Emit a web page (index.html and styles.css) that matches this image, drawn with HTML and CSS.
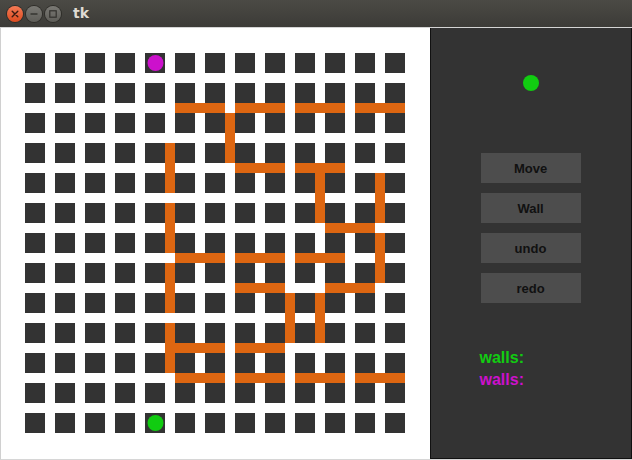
FILE: index.html
```html
<!DOCTYPE html>
<html>
<head>
<meta charset="utf-8">
<title>tk</title>
<link rel="stylesheet" href="styles.css">
</head>
<body>
<div class="window">
  <div class="titlebar">
    <div class="wbtn close"><svg width="16" height="16" viewBox="0 0 16 16"><path d="M5.2 5.2 L10.8 10.8 M10.8 5.2 L5.2 10.8" stroke="#3a1a10" stroke-width="1.4" stroke-linecap="round"/></svg></div>
    <div class="wbtn"><svg width="16" height="16" viewBox="0 0 16 16"><path d="M4.5 8 H11.5" stroke="#32312d" stroke-width="1.4"/></svg></div>
    <div class="wbtn"><svg width="16" height="16" viewBox="0 0 16 16"><rect x="4.8" y="4.8" width="6.4" height="6.4" fill="none" stroke="#32312d" stroke-width="1.2"/></svg></div>
    <span class="title">tk</span>
  </div>
  <div class="main">
    <div class="board">
      <svg width="429" height="431" viewBox="1 28 429 431">
        <defs>
          <pattern id="cells" x="25" y="53" width="30" height="30" patternUnits="userSpaceOnUse">
            <rect x="0" y="0" width="20" height="20" fill="#333333"/>
          </pattern>
        </defs>
        <rect x="1" y="28" width="429" height="431" fill="#ffffff"/>
        <rect x="25" y="53" width="390" height="390" fill="url(#cells)"/>
        <g fill="#dd6611">
          <rect x="175" y="103" width="50" height="10"/>
          <rect x="235" y="103" width="50" height="10"/>
          <rect x="295" y="103" width="50" height="10"/>
          <rect x="355" y="103" width="50" height="10"/>
          <rect x="235" y="163" width="50" height="10"/>
          <rect x="295" y="163" width="50" height="10"/>
          <rect x="325" y="223" width="50" height="10"/>
          <rect x="175" y="253" width="50" height="10"/>
          <rect x="235" y="253" width="50" height="10"/>
          <rect x="295" y="253" width="50" height="10"/>
          <rect x="235" y="283" width="50" height="10"/>
          <rect x="325" y="283" width="50" height="10"/>
          <rect x="175" y="343" width="50" height="10"/>
          <rect x="235" y="343" width="50" height="10"/>
          <rect x="175" y="373" width="50" height="10"/>
          <rect x="235" y="373" width="50" height="10"/>
          <rect x="295" y="373" width="50" height="10"/>
          <rect x="355" y="373" width="50" height="10"/>
          <rect x="225" y="113" width="10" height="50"/>
          <rect x="165" y="143" width="10" height="50"/>
          <rect x="165" y="203" width="10" height="50"/>
          <rect x="165" y="263" width="10" height="50"/>
          <rect x="165" y="323" width="10" height="50"/>
          <rect x="315" y="173" width="10" height="50"/>
          <rect x="375" y="173" width="10" height="50"/>
          <rect x="375" y="233" width="10" height="50"/>
          <rect x="285" y="293" width="10" height="50"/>
          <rect x="315" y="293" width="10" height="50"/>
        </g>
        <circle cx="155.5" cy="63" r="8" fill="#cc11cc"/>
        <circle cx="155.5" cy="423" r="8" fill="#11cc11"/>
      </svg>
    </div>
    <div class="panel">
      <div class="turn-dot"></div>
      <div class="buttons">
        <div class="btn">Move</div>
        <div class="btn">Wall</div>
        <div class="btn">undo</div>
        <div class="btn">redo</div>
      </div>
      <div class="labels">
        <div class="label green">walls:</div>
        <div class="label magenta">walls:</div>
      </div>
    </div>
  </div>
</div>
</body>
</html>
```
FILE: styles.css
```css
html, body {
  margin: 0;
  padding: 0;
  background: #ffffff;
}
.window {
  width: 632px;
  height: 460px;
  overflow: hidden;
  display: flex;
  flex-direction: column;
}
.titlebar {
  height: 27px;
  border-bottom: 1px solid #d4d4d4;
  background: linear-gradient(#4b4a45, #3c3b37);
  display: flex;
  align-items: center;
  padding-left: 7px;
  gap: 3px;
  box-sizing: content-box;
}
.wbtn {
  width: 16px;
  height: 16px;
  border-radius: 50%;
  background: linear-gradient(#7a7974, #5e5d58);
  box-shadow: 0 0 0 1px #2e2d29;
  display: flex;
}
.wbtn.close {
  background: linear-gradient(#f47a55, #dd4b1f);
}
.title {
  font-family: "DejaVu Sans", sans-serif;
  font-weight: bold;
  font-size: 14px;
  color: #dfdbd2;
  margin-left: 9px;
  margin-top: -1px;
}
.main {
  display: flex;
  height: 431px;
  border-left: 1px solid #d0d0d0;
  border-bottom: 1px solid #d6d6d6;
}
.board {
  width: 429px;
  height: 431px;
}
.board svg {
  display: block;
}
.panel {
  width: 199px;
  height: 430px;
  padding-right: 1px;
  background: #333333;
  border: 1px solid #111111;
  border-top: none;
  display: flex;
  flex-direction: column;
  align-items: center;
}
.turn-dot {
  width: 16px;
  height: 16px;
  border-radius: 50%;
  background: #11cc11;
  margin-top: 47px;
}
.buttons {
  margin-top: 62px;
  display: flex;
  flex-direction: column;
  gap: 10px;
}
.btn {
  width: 100px;
  height: 30px;
  background: #4d4d4d;
  color: #111111;
  font-family: "Liberation Sans", Arial, sans-serif;
  font-weight: bold;
  font-size: 13px;
  display: flex;
  align-items: center;
  justify-content: center;
}
.labels {
  width: 100px;
  margin-top: 44px;
  margin-left: -2px;
}
.label {
  font-family: "Liberation Sans", Arial, sans-serif;
  font-weight: bold;
  font-size: 16px;
  line-height: 22px;
}
.green { color: #11cc11; }
.magenta { color: #cc11cc; }
```
